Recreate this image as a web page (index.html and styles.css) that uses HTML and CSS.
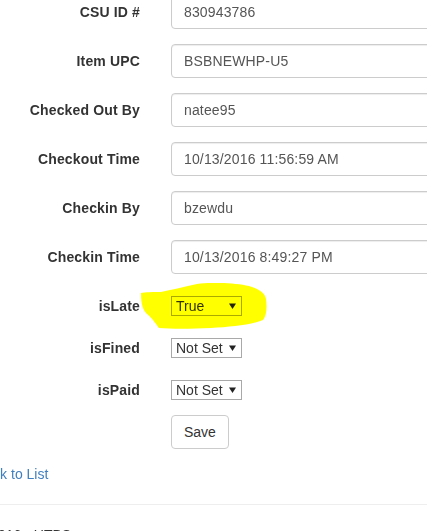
FILE: index.html
```html
<!DOCTYPE html>
<html>
<head>
<meta charset="utf-8">
<link rel="stylesheet" href="styles.css">
</head>
<body>
<div class="page">
  <form class="form">
    <div class="group">
      <label class="label">CSU ID #</label>
      <div class="control"><input class="input" type="text" value="830943786"></div>
    </div>
    <div class="group">
      <label class="label">Item UPC</label>
      <div class="control"><input class="input" type="text" value="BSBNEWHP-U5"></div>
    </div>
    <div class="group">
      <label class="label">Checked Out By</label>
      <div class="control"><input class="input" type="text" value="natee95"></div>
    </div>
    <div class="group">
      <label class="label">Checkout Time</label>
      <div class="control"><input class="input" type="text" value="10/13/2016 11:56:59 AM"></div>
    </div>
    <div class="group">
      <label class="label">Checkin By</label>
      <div class="control"><input class="input" type="text" value="bzewdu"></div>
    </div>
    <div class="group">
      <label class="label">Checkin Time</label>
      <div class="control"><input class="input" type="text" value="10/13/2016 8:49:27 PM"></div>
    </div>
    <div class="group">
      <label class="label">isLate</label>
      <div class="control">
        <span class="select-wrap">
          <select class="select"><option>True</option><option>Not Set</option><option>False</option></select>
          <svg class="arrow" width="7" height="6" viewBox="0 0 7 6"><path d="M0 0.5H7L3.5 6Z" fill="#222"/></svg>
        </span>
        <svg class="highlight" width="130" height="50" viewBox="0 0 130 50"><path d="M0 10 C4 9 12 9 20 9 C30 7 42 4 56 1 C72 -1 95 0 108 3 C118 6 124 10 125 16 C126 23 126 32 122 37 C110 42 90 44 70 45 C50 46 30 46 18 45 C15 41 12 36 6 31 C2 27 0 22 0 10 Z" fill="#ffff00"/></svg>
      </div>
    </div>
    <div class="group">
      <label class="label">isFined</label>
      <div class="control">
        <span class="select-wrap">
          <select class="select"><option>Not Set</option><option>True</option><option>False</option></select>
          <svg class="arrow" width="7" height="6" viewBox="0 0 7 6"><path d="M0 0.5H7L3.5 6Z" fill="#222"/></svg>
        </span>
      </div>
    </div>
    <div class="group">
      <label class="label">isPaid</label>
      <div class="control">
        <span class="select-wrap">
          <select class="select"><option>Not Set</option><option>True</option><option>False</option></select>
          <svg class="arrow" width="7" height="6" viewBox="0 0 7 6"><path d="M0 0.5H7L3.5 6Z" fill="#222"/></svg>
        </span>
      </div>
    </div>
    <div class="group">
      <div class="label-spacer"></div>
      <div class="control"><button class="btn" type="button">Save</button></div>
    </div>
  </form>
  <div class="back"><a href="#" class="link">Back to List</a></div>
  <hr class="rule">
  <footer class="footer">© 2016 - UTBS</footer>
</div>
</body>
</html>
```

FILE: styles.css
```css
html, body {
  margin: 0;
  padding: 0;
  background: #fff;
  overflow: hidden;
}
body {
  font-family: "Liberation Sans", Arial, sans-serif;
  font-size: 14px;
  line-height: 20px;
  color: #333;
}
.page {
  margin-left: -24px;
  margin-top: -5px;
  width: 520px;
}
.form {
  margin: 0;
}
.group {
  display: flex;
  align-items: flex-start;
  margin-bottom: 15px;
}
.label,
.label-spacer {
  flex: 0 0 164px;
  width: 164px;
  padding-right: 15px;
  box-sizing: content-box;
  text-align: right;
  font-weight: bold;
  letter-spacing: 0.15px;
  padding-top: 7px;
  line-height: 20px;
}
.label-spacer {
  padding-top: 0;
}
.control {
  padding-left: 16px;
  position: relative;
}
.input {
  display: block;
  box-sizing: border-box;
  width: 280px;
  height: 34px;
  padding: 6px 12px;
  font-family: inherit;
  font-size: 14px;
  letter-spacing: 0.15px;
  line-height: 20px;
  color: #555;
  background: #fff;
  border: 1px solid #ccc;
  border-radius: 4px;
  box-shadow: inset 0 1px 1px rgba(0,0,0,.075);
  margin: 0;
}
.select-wrap {
  position: relative;
  display: inline-block;
  margin-top: 7px;
  height: 20px;
}
.select {
  display: block;
  -webkit-appearance: none;
  appearance: none;
  box-sizing: border-box;
  width: 71px;
  height: 20px;
  margin: 0;
  padding: 0 0 0 4px;
  font-family: inherit;
  font-size: 14px;
  line-height: 18px;
  color: #333;
  background: #fff;
  border: 1px solid #a9a9a9;
  border-radius: 0;
  outline: none;
}
.arrow {
  position: absolute;
  left: 58px;
  top: 7px;
  pointer-events: none;
}
.highlight {
  position: absolute;
  left: -14px;
  top: -6px;
  mix-blend-mode: multiply;
  pointer-events: none;
}
.btn {
  display: block;
  box-sizing: border-box;
  height: 34px;
  padding: 6px 12px;
  font-family: inherit;
  font-size: 14px;
  line-height: 20px;
  color: #333;
  background: #fff;
  border: 1px solid #ccc;
  border-radius: 4px;
  margin: 0;
}
.back {
  line-height: 20px;
}
.link {
  color: #3f7fbf;
  text-decoration: none;
}
.rule {
  margin: 20px 0;
  border: 0;
  border-top: 1px solid #eee;
  height: 0;
}
.footer {
  line-height: 20px;
}
```
